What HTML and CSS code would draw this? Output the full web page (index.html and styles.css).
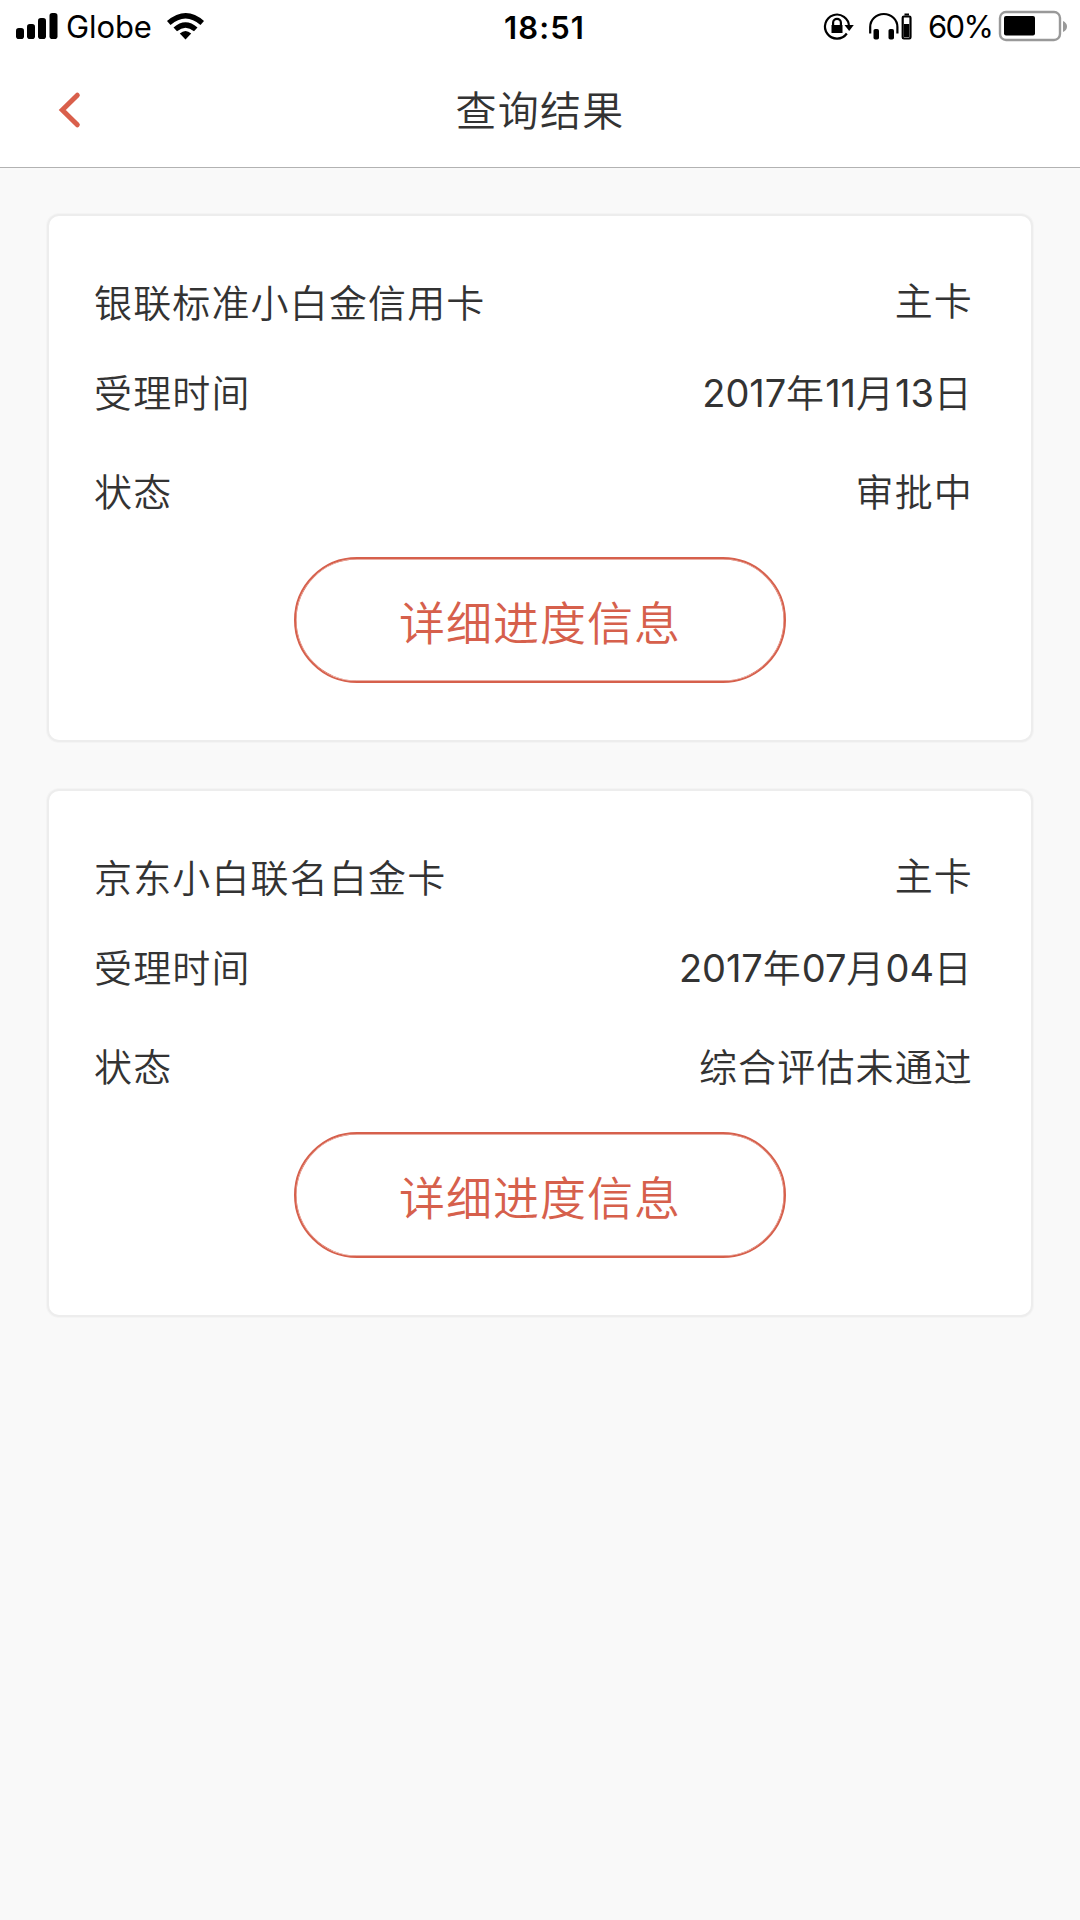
FILE: index.html
```html
<!DOCTYPE html>
<html lang="zh-CN">
<head>
<meta charset="utf-8">
<title>查询结果</title>
<link rel="stylesheet" href="styles.css">
</head>
<body>
<header class="header">
  <div class="status">
    <div class="status-left">
      <svg class="signal" width="42" height="26" viewBox="0 0 42 26">
        <rect x="0" y="15" width="8" height="11" rx="2.8"/>
        <rect x="11" y="11" width="8" height="15" rx="2.8"/>
        <rect x="22" y="5" width="8" height="21" rx="2.8"/>
        <rect x="33.5" y="0" width="8" height="26" rx="2.8"/>
      </svg>
      <span class="carrier">Globe</span>
      <svg class="wifi" width="38" height="27" viewBox="0 0 38 27">
        <path d="M0 8Q19-8 37 8L33.500 12Q18.500-1 3.500 12Z"/>
        <path d="M6.500 14.500Q18.500 4 30.500 14.500L27 18.300Q18.500 11 10 18.300Z"/>
        <path d="M12.800 20.500Q18.500 15.500 24.200 20.500L18.500 26.500Z"/>
      </svg>
    </div>
    <span class="time">18:51</span>
    <div class="status-right">
      <svg class="lock" width="30" height="27" viewBox="0 0 30 27">
        <path class="line" d="M25 13.500A12 12 0 1 0 22.800 20.500"/>
        <path d="M20.500 12H29.800L25.200 18Z"/>
        <path d="M7.500 12H18.500V20H7.500Z"/>
        <path class="line" d="M9.100 13V9.800a3.900 3.900 0 0 1 7.800 0V13"/>
      </svg>
      <svg class="phones" width="43" height="27" viewBox="0 0 43 27">
        <path class="line" d="M1.200 20.500V14A13.400 12.800 0 0 1 28.400 14V20.500"/>
        <rect x="4.500" y="16" width="5.500" height="10.500" rx="1.800"/>
        <rect x="19.500" y="16" width="5.500" height="10.500" rx="1.800"/>
        <rect class="line" x="33.700" y="3.500" width="7.800" height="22" rx="1.200"/>
        <rect x="35.500" y="0.500" width="4.500" height="2"/>
        <rect x="35" y="11" width="5.200" height="13"/>
      </svg>
      <span class="percent">60%</span>
      <svg class="battery" width="68" height="30" viewBox="0 0 68 30">
        <rect class="shell" x="1" y="1" width="60" height="28" rx="6"/>
        <rect x="5" y="5" width="31" height="19.500" rx="2"/>
        <path class="cap" d="M64 10Q68 12 68 15.500T64 21Z"/>
      </svg>
    </div>
  </div>
  <nav class="nav">
    <svg class="back" width="22" height="36" viewBox="0 0 22 36"><path d="M18.300 3.200L3.300 18L18.300 32.800"/></svg>
    <h1 class="title">查询结果</h1>
  </nav>
</header>
<main class="list">
  <section class="card">
    <div class="row row-name"><span>银联标准小白金信用卡</span><span class="kind">主卡</span></div>
    <div class="row row-date"><span>受理时间</span><span><span class="num">2017</span>年<span class="num">11</span>月<span class="num">13</span>日</span></div>
    <div class="row"><span>状态</span><span>审批中</span></div>
    <button class="detail">详细进度信息</button>
  </section>
  <section class="card">
    <div class="row row-name"><span>京东小白联名白金卡</span><span class="kind">主卡</span></div>
    <div class="row row-date"><span>受理时间</span><span><span class="num">2017</span>年<span class="num">07</span>月<span class="num">04</span>日</span></div>
    <div class="row"><span>状态</span><span>综合评估未通过</span></div>
    <button class="detail">详细进度信息</button>
  </section>
</main>
</body>
</html>
```
FILE: styles.css
```css
* { box-sizing: border-box; }
body {
  margin: 0;
  min-height: 1920px;
  background: #f9f9f9;
  color: #333;
  font-family: Inter, "Noto Sans CJK SC", sans-serif;
}
svg { display: block; flex: none; overflow: visible; }
.header {
  height: 168px;
  background: #fff;
  border-bottom: 1px solid #b2b2b2;
}
.status {
  display: grid;
  grid-template-columns: 1fr auto 1fr;
  height: 54px;
  padding: 0 13px 0 16px;
  color: #000;
  font-size: 31px;
  line-height: 56px;
}
.status-left, .status-right { display: flex; align-items: center; height: 54px; }
.status-right { justify-content: flex-end; }
.signal { margin-right: 8px; margin-top: -2px; }
.wifi { margin-left: 16px; margin-top: -2px; }
.carrier { width: 85px; letter-spacing: -0.1px; }
.time { font-weight: 600; letter-spacing: 1.1px; padding-left: 6px; }
.line { fill: none; stroke: #000; stroke-width: 2.2; }
.lock { margin-right: 15px; margin-top: -2px; }
.phones { margin-right: 16px; margin-top: -2px; }
.percent { width: 65px; margin-right: 6px; letter-spacing: -1.6px; }
.battery { margin-top: -2px; }
.shell { fill: #fff; stroke: #999; stroke-width: 2.4; }
.cap { fill: #999; }
.nav {
  display: grid;
  grid-template-columns: 1fr auto 1fr;
  align-items: center;
  height: 112px;
  padding: 0 59px 0 59px;
}
.back { fill: none; stroke: #d95f4b; stroke-width: 5; stroke-linecap: round; }
.title {
  margin: 0;
  padding-top: 2px;
  font-size: 41px;
  font-weight: 350;
  line-height: 60px;
  letter-spacing: 1.2px;
}
.list {
  display: flex;
  flex-direction: column;
  gap: 47px;
  padding: 46px 47px 0;
}
.card {
  display: flex;
  flex-direction: column;
  height: 528px;
  padding: 57px 58px 0 45px;
  background: #fff;
  border: 2px solid #ededed;
  border-radius: 12px;
  box-shadow: 0 0 0 1px #f4f4f4;
}
.row {
  display: flex;
  justify-content: space-between;
  height: 60px;
  font-size: 38px;
  font-weight: 350;
  line-height: 60px;
  letter-spacing: 1.15px;
}
.row-name { margin-bottom: 30px; }
.row-date { margin-bottom: 39px; }
.kind { line-height: 57px; }
.num { font-weight: 400; letter-spacing: -0.1px; }
.detail {
  align-self: flex-start;
  width: 492px;
  height: 126px;
  margin: 35px 0 0 200px;
  padding: 6px 0 0;
  background: #fff;
  border: 2px solid #d6604c;
  border-radius: 63px;
  box-shadow: inset 0 0 0 0.5px #d6604c;
  color: #d6604c;
  font: 350 46px/60px Inter, "Noto Sans CJK SC", sans-serif;
  letter-spacing: 1px;
}
```
